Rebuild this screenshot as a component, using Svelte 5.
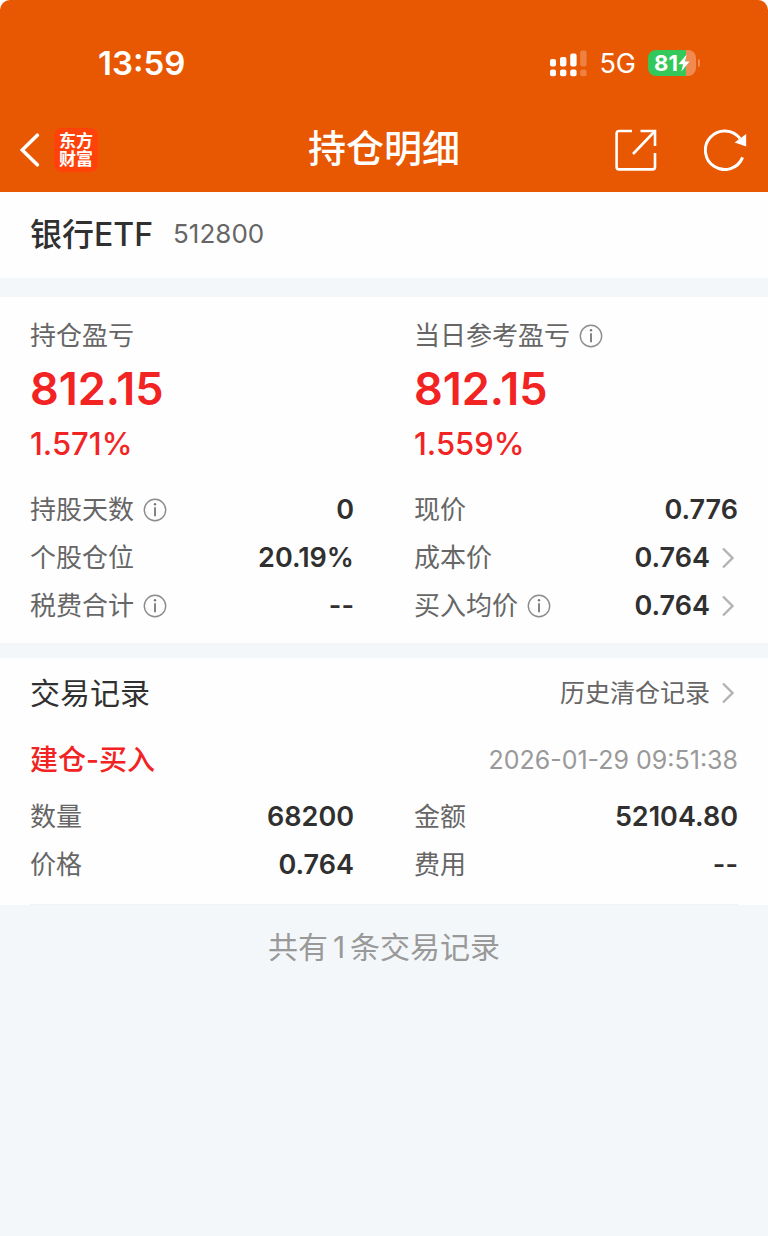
<script lang="ts">
    type Row = { label: string; value: string; info?: boolean; link?: boolean };

    const totals = [
        { label: '持仓盈亏', amount: '812.15', rate: '1.571%', info: false },
        { label: '当日参考盈亏', amount: '812.15', rate: '1.559%', info: true },
    ];

    const details: Row[] = [
        { label: '持股天数', value: '0', info: true },
        { label: '现价', value: '0.776' },
        { label: '个股仓位', value: '20.19%' },
        { label: '成本价', value: '0.764', link: true },
        { label: '税费合计', value: '--', info: true },
        { label: '买入均价', value: '0.764', info: true, link: true },
    ];

    const records: { type: string; time: string; rows: Row[] }[] = [
        {
            type: '建仓-买入',
            time: '2026-01-29 09:51:38',
            rows: [
                { label: '数量', value: '68200' },
                { label: '金额', value: '52104.80' },
                { label: '价格', value: '0.764' },
                { label: '费用', value: '--' },
            ],
        },
    ];
</script>

{#snippet infoButton(label: string)}
    <button class="info" type="button" aria-label={`${label}说明`}>
        <svg width="24" height="24" viewBox="0 0 24 24" fill="none">
            <circle cx="12" cy="12" r="10.7" stroke="#8c8c8c" stroke-width="1.4" />
            <circle cx="12" cy="6.2" r="1.2" fill="#777" />
            <path d="M12 9.2v9" stroke="#777" stroke-width="1.8" />
        </svg>
    </button>
{/snippet}

{#snippet chevron()}
    <svg class="chevron" width="12" height="22" viewBox="0 0 12 22" fill="none">
        <path d="M1 1.5L10.5 11L1 20.5" stroke="#b3b3b3" stroke-width="2.4" />
    </svg>
{/snippet}

{#snippet rowList(rows: Row[])}
    <dl class="grid">
        {#each rows as row}
            <div class="row">
                <dt class="label">
                    {row.label}
                    {#if row.info}{@render infoButton(row.label)}{/if}
                </dt>
                <dd class="value">
                    {#if row.link}
                        <a class="more" href="#detail">{row.value}{@render chevron()}</a>
                    {:else}
                        {row.value}
                    {/if}
                </dd>
            </div>
        {/each}
    </dl>
{/snippet}

<div class="top">
    <header>
        <div class="status">
            <span class="time">13:59</span>
            <div class="indicators">
                <svg width="38" height="28" viewBox="0 0 38 28" fill="#fff">
                    <rect x="1" y="10" width="6" height="7.5" rx="2" />
                    <rect x="11" y="8" width="6.4" height="9.5" rx="2" />
                    <rect x="21.2" y="4.4" width="6.4" height="13.1" rx="2" />
                    <rect x="31.2" y="1.4" width="6.4" height="16.1" rx="2" opacity="0.25" />
                    <rect x="1" y="20.6" width="6" height="6.6" rx="2" />
                    <rect x="11" y="20.6" width="6.4" height="6.6" rx="2" />
                    <rect x="21.2" y="20.6" width="6.4" height="6.6" rx="2" />
                    <rect x="31.2" y="20.6" width="6.4" height="6.6" rx="2" opacity="0.25" />
                </svg>
                <span class="network">5G</span>
                <div class="battery">
                    <span class="charge">
                        81
                        <svg width="12" height="18" viewBox="0 0 12 18" fill="#fff">
                            <path d="M8.6 0.5L0.4 10.2H5L3.4 17.5L11.6 7.4H7Z" />
                        </svg>
                    </span>
                </div>
            </div>
        </div>

        <nav>
            <div class="side">
                <button type="button" aria-label="返回">
                    <svg width="20" height="34" viewBox="0 0 20 34" fill="none">
                        <path
                            d="M17.3 2.2L2.2 17L17.3 31.8"
                            stroke="#fff"
                            stroke-width="3.6"
                            stroke-linecap="round"
                        />
                    </svg>
                </button>
                <span class="logo">东方<br />财富</span>
            </div>
            <h1>持仓明细</h1>
            <div class="side end">
                <button type="button" aria-label="分享">
                    <svg width="42" height="42" viewBox="0 0 42 42" fill="none" stroke="#fff" stroke-width="2.6">
                        <path d="M17 2H4Q1.6 2 1.6 4.4V38Q1.6 40.4 4 40.4H37.6Q40 40.4 40 38V24" />
                        <path d="M25.5 2H40V17" />
                        <path d="M18 25L39.5 2.5" />
                    </svg>
                </button>
                <button type="button" aria-label="刷新">
                    <svg width="44" height="42" viewBox="0 0 44 42" fill="none">
                        <path
                            d="M38.6 28.4A19.3 19.3 0 1 1 36 9.5"
                            stroke="#fff"
                            stroke-width="3"
                        />
                        <path d="M42.2 5V17.6L30.6 13.4Z" fill="#fff" />
                    </svg>
                </button>
            </div>
        </nav>
    </header>
</div>

<main>
    <section class="stock">
        <h2>银行ETF</h2>
        <span class="code">512800</span>
    </section>

    <section class="summary">
        <div class="grid totals">
            {#each totals as total}
                <div class="total">
                    <div class="label">
                        {total.label}
                        {#if total.info}{@render infoButton(total.label)}{/if}
                    </div>
                    <div class="amount">{total.amount}</div>
                    <div class="rate">{total.rate}</div>
                </div>
            {/each}
        </div>
        {@render rowList(details)}
    </section>

    <section class="records">
        <div class="heading">
            <h3>交易记录</h3>
            <a class="history" href="#history">历史清仓记录{@render chevron()}</a>
        </div>
        {#each records as record}
            <article>
                <div class="record-head">
                    <h4>{record.type}</h4>
                    <time>{record.time}</time>
                </div>
                {@render rowList(record.rows)}
            </article>
        {/each}
    </section>

    <p class="count">共有<span>{records.length}</span>条交易记录</p>
</main>

<style>
    :global(body) {
        margin: 0;
        background: #f3f7f9;
        color: #303030;
        font-family: Inter, 'Noto Sans CJK SC', sans-serif;
    }

    h1,
    h2,
    h3,
    h4,
    p,
    dl,
    dd {
        margin: 0;
        font-weight: 400;
    }

    button {
        display: flex;
        padding: 0;
        border: 0;
        background: none;
        cursor: pointer;
    }

    a {
        color: inherit;
        text-decoration: none;
    }

    svg {
        display: block;
        flex: none;
    }

    /* Header */
    .top {
        background: #fff;
    }

    header {
        background: #e85702;
        border-radius: 10px 10px 0 0;
        color: #fff;
    }

    .status {
        display: flex;
        align-items: center;
        justify-content: space-between;
        height: 90px;
        padding: 18px 72px 0 98px;
    }

    .time {
        font-size: 33px;
        font-weight: 600;
    }

    .indicators {
        display: flex;
        align-items: center;
        gap: 12px;
    }

    .network {
        font-size: 27px;
    }

    .battery {
        position: relative;
        width: 48px;
        height: 26px;
        border-radius: 8px;
        background: linear-gradient(90deg, #34c759 80%, #f08a50 80%);
    }

    .battery::after {
        content: '';
        position: absolute;
        left: 50px;
        top: 9px;
        width: 2px;
        height: 8px;
        border-radius: 0 2px 2px 0;
        background: #f08a50;
    }

    .charge {
        display: flex;
        align-items: center;
        justify-content: center;
        height: 26px;
        font-size: 22px;
        font-weight: 700;
    }

    nav {
        display: grid;
        grid-template-columns: 1fr auto 1fr;
        align-items: center;
        height: 84px;
        padding: 0 20px;
    }

    .side {
        display: flex;
        align-items: center;
        gap: 14px;
    }

    .side.end {
        justify-content: flex-end;
        gap: 47px;
    }

    .logo {
        width: 44px;
        padding: 4px 0;
        border-radius: 8px;
        background: #ff4209;
        font-size: 17px;
        font-weight: 700;
        line-height: 18px;
        text-align: center;
    }

    h1 {
        padding-bottom: 4px;
        font-size: 38px;
        font-weight: 500;
        line-height: 48px;
    }

    /* Sections */
    section {
        padding: 0 30px;
        background: #fefefe;
    }

    .stock {
        display: flex;
        align-items: center;
        gap: 20px;
        height: 86px;
        margin-bottom: 19px;
    }

    h2 {
        font-size: 32px;
        font-weight: 500;
        line-height: 84px;
    }

    .code {
        padding-bottom: 4px;
        color: #666;
        font-size: 26px;
    }

    .summary {
        margin-bottom: 15px;
        padding-top: 15px;
        padding-bottom: 13px;
    }

    .grid {
        display: grid;
        grid-template-columns: 1fr 1fr;
        column-gap: 60px;
    }

    .totals {
        margin-bottom: 16px;
    }

    .label {
        display: flex;
        align-items: center;
        gap: 9px;
        color: #666;
        font-size: 26px;
        line-height: 48px;
    }

    .amount {
        color: #f22323;
        font-size: 45px;
        font-weight: 600;
        line-height: 58px;
    }

    .rate {
        color: #f22323;
        font-size: 31px;
        font-weight: 500;
        line-height: 52px;
    }

    .row {
        display: flex;
        align-items: center;
        justify-content: space-between;
    }

    .value {
        font-size: 27px;
        font-weight: 600;
        line-height: 48px;
    }

    .more,
    .history {
        display: flex;
        align-items: center;
        gap: 12px;
    }

    .chevron {
        margin-right: 4px;
    }

    /* Trade records */
    .heading,
    .record-head {
        display: flex;
        align-items: center;
        justify-content: space-between;
    }

    article {
        padding-bottom: 15px;
        border-bottom: 1px solid #f1f3f4;
    }

    h3 {
        font-size: 30px;
        line-height: 70px;
    }

    .history {
        color: #666;
        font-size: 25px;
        line-height: 70px;
    }

    h4 {
        color: #f22323;
        font-size: 28px;
        font-weight: 500;
        line-height: 65px;
    }

    time {
        padding-bottom: 2px;
        color: #999;
        font-size: 25px;
    }

    .count {
        padding: 18px 30px;
        color: #999;
        font-size: 30px;
        line-height: 48px;
        text-align: center;
    }

    .count span {
        margin: 0 5px;
    }
</style>
